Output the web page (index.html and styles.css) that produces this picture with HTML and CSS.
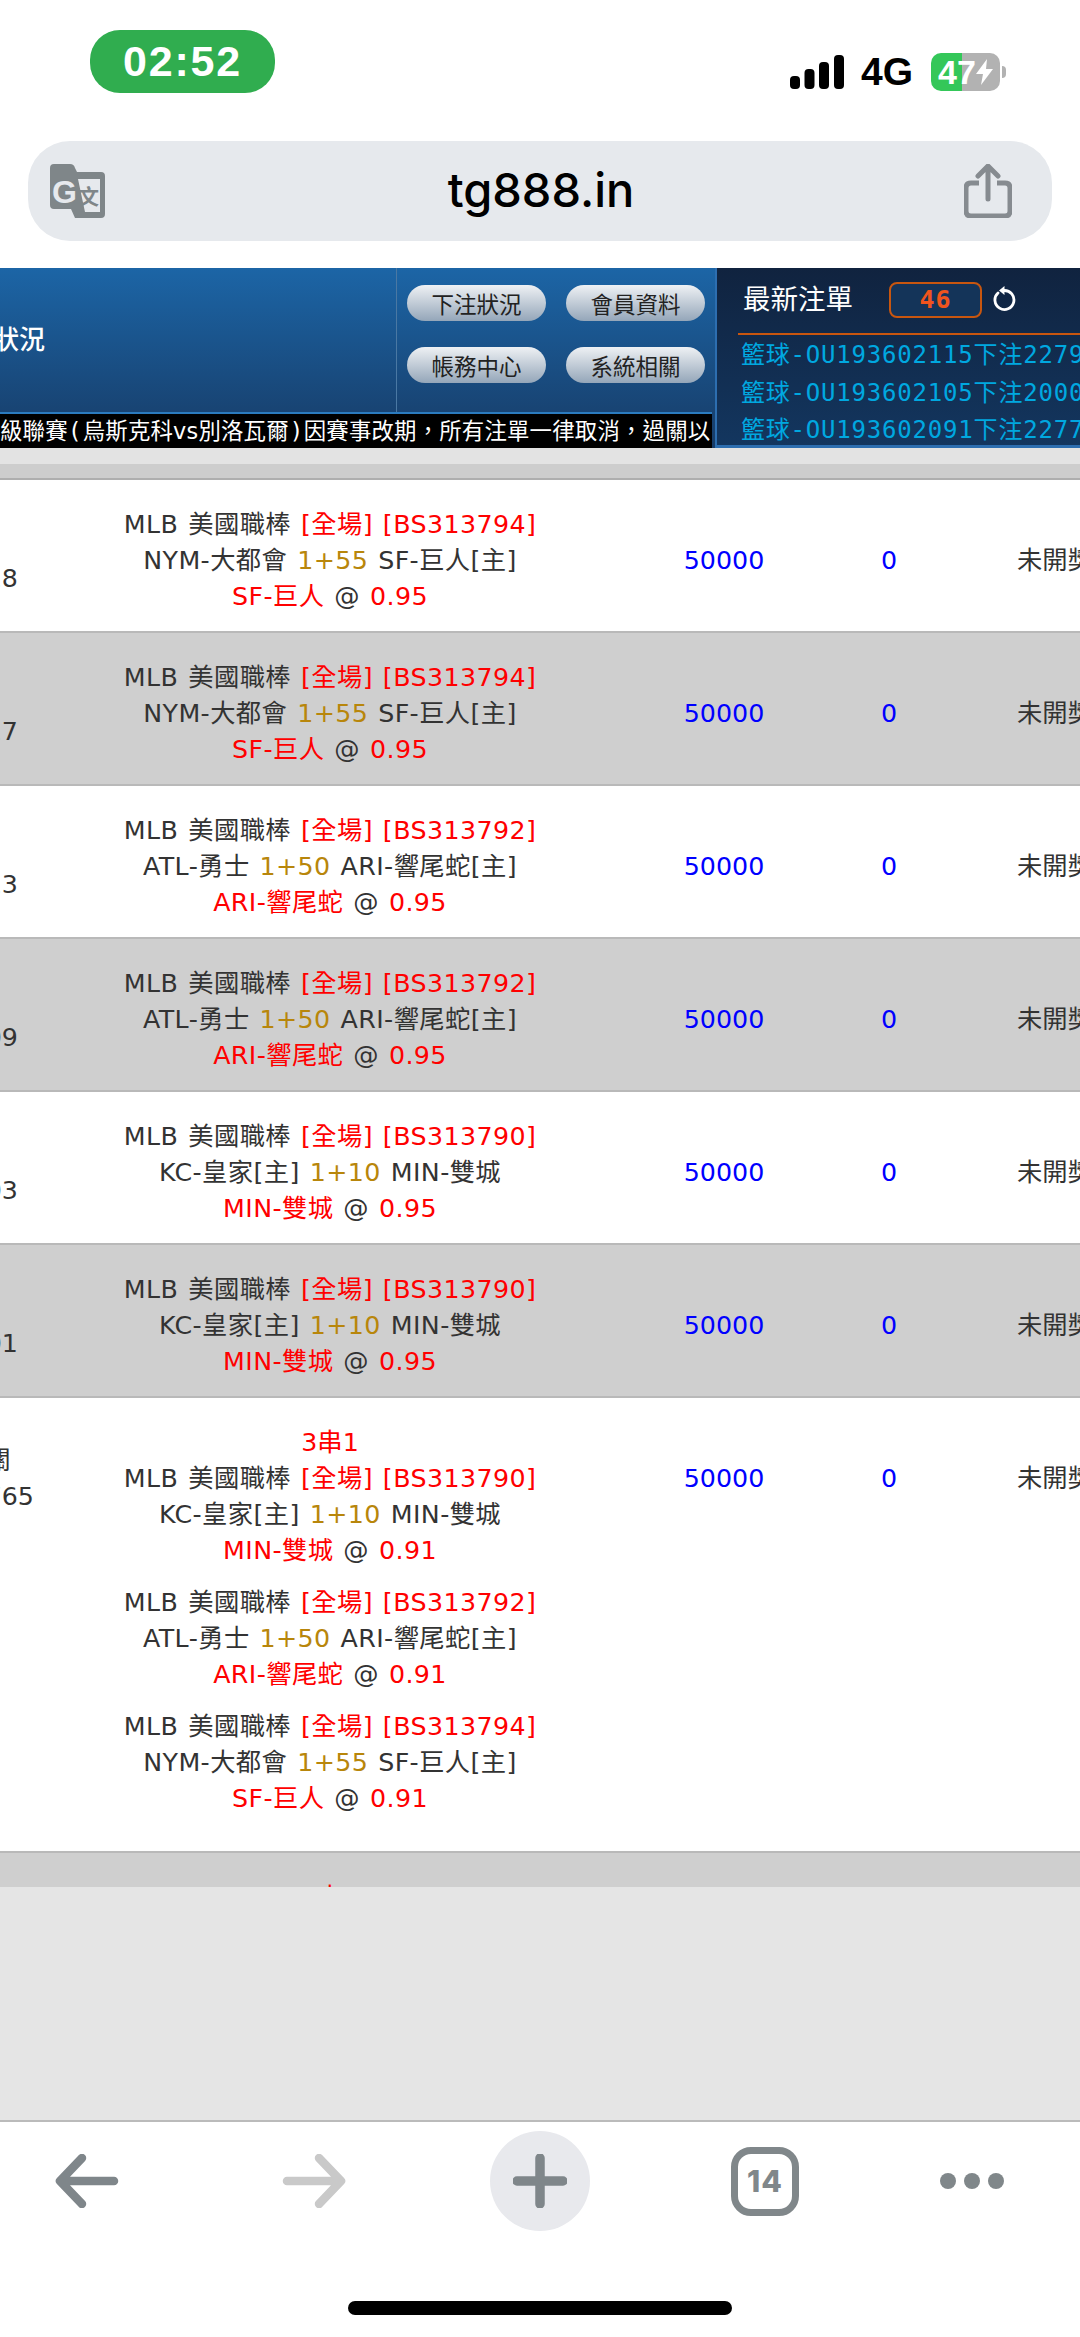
FILE: index.html
```html
<!DOCTYPE html>
<html lang="zh-Hant">
<head>
    <meta charset="UTF-8">
    <meta name="viewport" content="width=device-width, initial-scale=1.0">
    <title>tg888.in</title>
    <link rel="stylesheet" href="styles.css">
</head>
<body>
    <!-- Phone status bar -->
    <div class="status-bar">
        <div class="clock">02:52</div>
        <div class="status-right">
            <svg class="signal" width="54" height="34" viewBox="0 0 54 34">
                <rect x="0" y="21" width="10" height="13" rx="4" fill="#000"/>
                <rect x="14.5" y="14" width="10" height="20" rx="4" fill="#000"/>
                <rect x="29" y="7" width="10" height="27" rx="4" fill="#000"/>
                <rect x="44" y="0" width="10" height="34" rx="4" fill="#000"/>
            </svg>
            <span class="network">4G</span>
            <div class="battery">
                <span>47</span>
                <svg width="17" height="26" viewBox="0 0 17 26"><path d="M11 0 L0 15 H7 L5 26 L17 10 H10 Z" fill="#fff"/></svg>
            </div>
            <div class="battery-nub"></div>
        </div>
    </div>

    <!-- Browser address bar -->
    <div class="url-bar">
        <svg width="56" height="56" viewBox="0 0 56 56">
            <path d="M4 1 H20 Q24 1 25 5 L27 9 H51 Q55 9 55 13 V51 Q55 55 51 55 H25 L21 46 H4 Q0 46 0 42 V5 Q0 1 4 1 Z" fill="#7f8689"/>
            <path d="M28 16 H50 V49 H35 Z" fill="#e6e9ed"/>
            <text x="2" y="40" class="icon-g">G</text>
            <text x="28" y="41" class="icon-wen">文</text>
        </svg>
        <span class="url-text">tg888.in</span>
        <svg width="48" height="54" viewBox="0 0 48 54">
            <path d="M15 19 H7 Q2 19 2 24 V47 Q2 52 7 52 H41 Q46 52 46 47 V24 Q46 19 41 19 H33" fill="none" stroke="#868b90" stroke-width="5"/>
            <path d="M24 35 V4 M14 12 L24 2 L34 12" fill="none" stroke="#868b90" stroke-width="5" stroke-linecap="round" stroke-linejoin="round"/>
        </svg>
    </div>

    <!-- Site header -->
    <header class="site-head">
        <div class="head-left">
            <div class="head-main">
                <div class="page-title"><span>下注狀況</span></div>
                <nav class="menu">
                    <button>下注狀況</button>
                    <button>會員資料</button>
                    <button>帳務中心</button>
                    <button>系統相關</button>
                </nav>
            </div>
            <div class="notice">級聯賽<span class="paren">(</span>烏斯克科vs別洛瓦爾<span class="paren">)</span>因賽事改期，所有注單一律取消，過關以</div>
        </div>
        <div class="head-right">
            <div class="latest-top">
                <span class="latest-title">最新注單</span>
                <span class="latest-count">46</span>
                <svg width="26" height="26" viewBox="0 0 26 26">
                    <path d="M7 7 A9.5 9.5 0 1 0 13 4.5" fill="none" stroke="#fff" stroke-width="2.8" stroke-linecap="round"/>
                    <path d="M13.5 0 V9 L8 4.5 Z" fill="#fff"/>
                </svg>
            </div>
            <div class="latest-list">
                <div>籃球-OU193602115下注22790</div>
                <div>籃球-OU193602105下注20000</div>
                <div>籃球-OU193602091下注22770</div>
            </div>
        </div>
    </header>

    <div class="strip-light"></div>
    <div class="strip-dark"></div>

    <!-- Bets table -->
    <div class="table-wrap">
        <table class="bets">
            <colgroup>
                <col class="col-id"><col class="col-match"><col class="col-stake"><col class="col-win"><col class="col-state">
            </colgroup>
            <tbody>
                <tr>
                    <td class="cell-id"><span class="id-label"></span>193602118</td>
                    <td class="cell-match">
                        <div class="bet">MLB 美國職棒 <em>[全場] [BS313794]</em><br>NYM-大都會 <b>1+55</b> SF-巨人[主]<br><em>SF-巨人</em> @ <em>0.95</em></div>
                    </td>
                    <td class="cell-num">50000</td>
                    <td class="cell-num">0</td>
                    <td class="cell-state">未開獎</td>
                </tr>
                <tr class="alt">
                    <td class="cell-id"><span class="id-label"></span>193602117</td>
                    <td class="cell-match">
                        <div class="bet">MLB 美國職棒 <em>[全場] [BS313794]</em><br>NYM-大都會 <b>1+55</b> SF-巨人[主]<br><em>SF-巨人</em> @ <em>0.95</em></div>
                    </td>
                    <td class="cell-num">50000</td>
                    <td class="cell-num">0</td>
                    <td class="cell-state">未開獎</td>
                </tr>
                <tr>
                    <td class="cell-id"><span class="id-label"></span>193602113</td>
                    <td class="cell-match">
                        <div class="bet">MLB 美國職棒 <em>[全場] [BS313792]</em><br>ATL-勇士 <b>1+50</b> ARI-響尾蛇[主]<br><em>ARI-響尾蛇</em> @ <em>0.95</em></div>
                    </td>
                    <td class="cell-num">50000</td>
                    <td class="cell-num">0</td>
                    <td class="cell-state">未開獎</td>
                </tr>
                <tr class="alt">
                    <td class="cell-id"><span class="id-label"></span>193602109</td>
                    <td class="cell-match">
                        <div class="bet">MLB 美國職棒 <em>[全場] [BS313792]</em><br>ATL-勇士 <b>1+50</b> ARI-響尾蛇[主]<br><em>ARI-響尾蛇</em> @ <em>0.95</em></div>
                    </td>
                    <td class="cell-num">50000</td>
                    <td class="cell-num">0</td>
                    <td class="cell-state">未開獎</td>
                </tr>
                <tr>
                    <td class="cell-id"><span class="id-label"></span>193602103</td>
                    <td class="cell-match">
                        <div class="bet">MLB 美國職棒 <em>[全場] [BS313790]</em><br>KC-皇家[主] <b>1+10</b> MIN-雙城<br><em>MIN-雙城</em> @ <em>0.95</em></div>
                    </td>
                    <td class="cell-num">50000</td>
                    <td class="cell-num">0</td>
                    <td class="cell-state">未開獎</td>
                </tr>
                <tr class="alt">
                    <td class="cell-id"><span class="id-label"></span>193602101</td>
                    <td class="cell-match">
                        <div class="bet">MLB 美國職棒 <em>[全場] [BS313790]</em><br>KC-皇家[主] <b>1+10</b> MIN-雙城<br><em>MIN-雙城</em> @ <em>0.95</em></div>
                    </td>
                    <td class="cell-num">50000</td>
                    <td class="cell-num">0</td>
                    <td class="cell-state">未開獎</td>
                </tr>
                <tr class="parlay">
                    <td class="cell-id"><span class="id-label">過關</span>1936020765</td>
                    <td class="cell-match">
                        <em>3串1</em>
                        <div class="bet">MLB 美國職棒 <em>[全場] [BS313790]</em><br>KC-皇家[主] <b>1+10</b> MIN-雙城<br><em>MIN-雙城</em> @ <em>0.91</em></div>
                        <div class="bet">MLB 美國職棒 <em>[全場] [BS313792]</em><br>ATL-勇士 <b>1+50</b> ARI-響尾蛇[主]<br><em>ARI-響尾蛇</em> @ <em>0.91</em></div>
                        <div class="bet">MLB 美國職棒 <em>[全場] [BS313794]</em><br>NYM-大都會 <b>1+55</b> SF-巨人[主]<br><em>SF-巨人</em> @ <em>0.91</em></div>
                    </td>
                    <td class="cell-num">50000</td>
                    <td class="cell-num">0</td>
                    <td class="cell-state">未開獎</td>
                </tr>
                <tr class="alt">
                    <td class="cell-id"></td>
                    <td class="cell-match"><em>3串1</em></td>
                    <td class="cell-num"></td>
                    <td class="cell-num"></td>
                    <td class="cell-state"></td>
                </tr>
            </tbody>
        </table>
    </div>

    <div class="filler"></div>

    <!-- Browser toolbar -->
    <div class="toolbar">
        <div class="tools">
            <svg class="tool-back" width="64" height="54" viewBox="0 0 64 54">
                <path d="M27 4 L5 27 L27 50 M6 27 H59" fill="none" stroke="#7f868a" stroke-width="8.5" stroke-linecap="round" stroke-linejoin="round"/>
            </svg>
            <svg class="tool-forward" width="64" height="54" viewBox="0 0 64 54">
                <path d="M37 4 L59 27 L37 50 M58 27 H5" fill="none" stroke="#c9c9c9" stroke-width="8.5" stroke-linecap="round" stroke-linejoin="round"/>
            </svg>
            <div class="tool-add">
                <svg width="54" height="54" viewBox="0 0 54 54">
                    <path d="M27 4 V50 M4 27 H50" fill="none" stroke="#7f868a" stroke-width="9.5" stroke-linecap="round"/>
                </svg>
            </div>
            <div class="tool-tabs">14</div>
            <div class="tool-more"><i></i><i></i><i></i></div>
        </div>
        <div class="home-bar"></div>
    </div>
</body>
</html>
```

FILE: styles.css
```css
/* Page frame */
html, body {
    margin: 0;
    padding: 0;
}

body {
    width: 1080px;
    height: 2337px;
    display: flex;
    flex-direction: column;
    overflow: hidden;
    background-color: #fff;
    font-family: "DejaVu Sans", "Noto Sans CJK TC", sans-serif;
}

/* Status bar */
.status-bar {
    height: 141px;
    display: flex;
    justify-content: space-between;
    flex: none;
}

.clock {
    width: 185px;
    height: 63px;
    margin: 30px 0 0 90px;
    border-radius: 30px;
    background-color: #30ad4f;
    color: #fff;
    font-family: "Liberation Sans", sans-serif;
    font-weight: bold;
    font-size: 43px;
    letter-spacing: 1.8px;
    line-height: 63px;
    text-align: center;
}

.status-right {
    display: flex;
    align-items: center;
    height: 40px;
    margin: 52px 74px 0 0;
}

.signal {
    margin-right: 17px;
}

.network {
    margin-right: 18px;
    font-family: "Liberation Sans", sans-serif;
    font-weight: bold;
    font-size: 39px;
    color: #000;
}

.battery {
    width: 69px;
    height: 38px;
    display: flex;
    align-items: center;
    padding-left: 7px;
    box-sizing: border-box;
    border-radius: 10px;
    background: linear-gradient(to right, #34c759 45%, #b2b2b2 45%);
    color: #fff;
    font-family: "Liberation Sans", sans-serif;
    font-weight: bold;
    font-size: 34px;
}

.battery-nub {
    width: 4px;
    height: 12px;
    margin-left: 2px;
    border-radius: 0 4px 4px 0;
    background-color: #b2b2b2;
}

/* Address bar */
.url-bar {
    height: 100px;
    margin: 0 28px 27px;
    padding: 0 40px 0 22px;
    display: flex;
    align-items: center;
    justify-content: space-between;
    flex: none;
    border-radius: 42px;
    background-color: #e6e9ed;
}

.url-text {
    margin: 0 0 3px 12px;
    font-family: Inter, sans-serif;
    font-size: 47px;
    font-weight: 500;
    color: #000;
}

.icon-g {
    font-family: "Liberation Sans", sans-serif;
    font-weight: bold;
    font-size: 32px;
    fill: #e6e9ed;
}

.icon-wen {
    font-family: "Noto Sans CJK TC", sans-serif;
    font-weight: bold;
    font-size: 21px;
    fill: #7f8689;
}

/* Site header */
.site-head {
    height: 180px;
    display: flex;
    flex: none;
    overflow: hidden;
}

.head-left {
    width: 715px;
    display: flex;
    flex-direction: column;
    flex: none;
    background: linear-gradient(to bottom, #1c65a6, #173b66);
}

.head-main {
    flex: 1;
    display: flex;
}

.page-title {
    width: 397px;
    box-sizing: border-box;
    border-right: 1px solid #4a78a3;
    display: flex;
    align-items: center;
    padding-bottom: 6px;
    overflow: hidden;
}

.page-title span {
    margin-left: -59px;
    color: #fff;
    font-size: 26px;
    font-weight: 500;
    white-space: nowrap;
}

.menu {
    display: grid;
    grid-template-columns: 139px 139px;
    grid-template-rows: 36px 36px;
    gap: 26px 20px;
    padding: 17px 0 0 10px;
}

.menu button {
    padding: 0;
    border: none;
    border-radius: 18px;
    background: linear-gradient(to bottom, #eef1f4, #94a6b9);
    color: #222;
    font-family: "Noto Sans CJK TC", sans-serif;
    font-size: 22.5px;
}

.notice {
    height: 34px;
    width: 712px;
    box-sizing: content-box;
    border-top: 2px solid #2b7bbf;
    background-color: #000;
    color: #fff;
    font-size: 22.4px;
    letter-spacing: 0.2px;
    line-height: 34px;
    white-space: nowrap;
    overflow: hidden;
}

.paren {
    margin: 0 3px;
}

.head-right {
    flex: 1;
    box-sizing: border-box;
    border-left: 2px solid #2d6eb0;
    border-bottom: 3px solid #2d6eb0;
    background: linear-gradient(to bottom, #10233f, #13365f);
    overflow: hidden;
}

.latest-top {
    height: 61px;
    margin-left: 21px;
    padding: 0 0 4px 5px;
    display: flex;
    align-items: center;
    border-bottom: 2px solid #c8560f;
}

.latest-title {
    width: 146px;
    margin-top: -4px;
    color: #fff;
    font-family: "Noto Sans CJK TC", sans-serif;
    font-size: 27.5px;
}

.latest-count {
    width: 89px;
    height: 32px;
    margin: 3px 9px 0 0;
    border: 2px solid #c8560f;
    border-radius: 8px;
    background-color: #143459;
    color: #f0541e;
    font-family: "DejaVu Sans Mono", monospace;
    font-weight: bold;
    font-size: 25px;
    letter-spacing: 1px;
    line-height: 32px;
    text-align: center;
}

.latest-list {
    margin: 2px 0 0 24px;
    color: #00a8e0;
    font-family: "DejaVu Sans Mono", "Noto Sans CJK TC", monospace;
    font-size: 24px;
    letter-spacing: 0.8px;
    line-height: 37.5px;
    white-space: nowrap;
}

/* Bands above the table */
.strip-light {
    height: 16px;
    flex: none;
    background-color: #e3e3e3;
}

.strip-dark {
    height: 14px;
    flex: none;
    border-bottom: 2px solid #aeaeae;
    background-color: #cdcdcd;
}

/* Bets table */
.table-wrap {
    height: 1407px;
    flex: none;
    overflow: hidden;
}

.bets {
    width: 1327px;
    margin-left: -127px;
    border-collapse: separate;
    border-spacing: 0;
    table-layout: fixed;
    color: #333;
    font-size: 25.3px;
    line-height: 36px;
}

.col-id { width: 207px; }
.col-match { width: 500px; }
.col-stake { width: 288px; }
.col-win { width: 42px; }
.col-state { width: 290px; }

.bets td {
    padding: 0;
    vertical-align: top;
    border-bottom: 2px solid #b9b9b9;
    white-space: nowrap;
    background-color: #fff;
}

.bets tr.alt td {
    background-color: #cfcfcf;
}

.bets em {
    font-style: normal;
    color: #f00;
}

.bets b {
    font-weight: normal;
    color: #b8860b;
}

.bets td.cell-id {
    padding-top: 45px;
}

.id-label {
    display: block;
    height: 36px;
    margin-left: 87px;
}

.bets td.cell-match {
    padding-top: 27px;
    text-align: center;
}

.bet {
    margin-bottom: 16px;
    letter-spacing: 0.4px;
    word-spacing: 1.5px;
}

.bets tr.parlay td.cell-match {
    padding-bottom: 18px;
}

.bets td.cell-num {
    padding-top: 63px;
    color: #00f;
    text-align: center;
}

.bets td.cell-state {
    padding-top: 63px;
    text-align: center;
}

.filler {
    flex: 1;
    background-color: #e5e5e5;
}

/* Toolbar */
.toolbar {
    height: 217px;
    flex: none;
    box-sizing: border-box;
    border-top: 2px solid #bbb;
    padding-top: 9px;
    background-color: #fff;
}

.tools {
    height: 100px;
    padding-left: 55px;
    display: flex;
    align-items: center;
    gap: 141px;
}

.tool-back {
    margin-right: 22px;
}

.tool-forward {
    margin-right: 3px;
}

.tool-add {
    width: 100px;
    height: 100px;
    display: flex;
    align-items: center;
    justify-content: center;
    border-radius: 50%;
    background-color: #e8e9ed;
}

.tool-tabs {
    width: 68px;
    height: 69px;
    box-sizing: border-box;
    border: 7px solid #80878a;
    border-radius: 20px;
    color: #80878a;
    font-family: Inter, sans-serif;
    font-weight: 800;
    font-size: 30px;
    letter-spacing: 1px;
    line-height: 54px;
    text-align: center;
}

.tool-more {
    display: flex;
    gap: 8px;
}

.tool-more i {
    width: 16px;
    height: 16px;
    border-radius: 50%;
    background-color: #80878a;
}

.home-bar {
    width: 384px;
    height: 14px;
    margin: 70px auto 0;
    border-radius: 7px;
    background-color: #000;
}
```
